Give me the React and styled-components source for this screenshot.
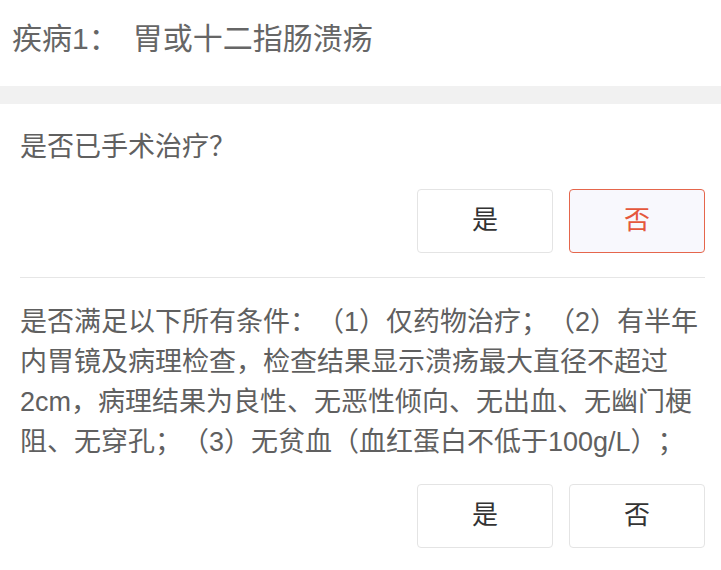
import React, { useState } from "react";
import styled, { createGlobalStyle } from "styled-components";

const Global = createGlobalStyle`
  html, body { margin: 0; padding: 0; background: #fff; }
  body {
    font-family: "Liberation Sans", "Noto Sans CJK SC", sans-serif;
    text-spacing-trim: space-all;
  }
  * { box-sizing: border-box; }
`;

const Page = styled.div`
  width: 721px;
  background: #fff;
`;

const Header = styled.div`
  height: 86px;
  display: flex;
  align-items: center;
  padding: 0 0 14px 12px;
  font-size: 30px;
  color: #666;
  text-spacing-trim: space-all;
`;

const DiseaseName = styled.span`
  margin-left: 14px;
`;

const Band = styled.div`
  height: 18px;
  background: #f1f1f1;
`;

const Body = styled.div`
  padding: 23px 16px 0 20px;
`;

const Question = styled.div`
  padding-bottom: 24px;
  border-bottom: ${(p) => (p.$last ? "none" : "1px solid #e6e6e6")};
  & + & { padding-top: 24px; }
`;

const Text = styled.div`
  font-size: 27px;
  line-height: 40px;
  color: #606060;
  text-spacing-trim: space-all;
`;

const Choices = styled.div`
  display: flex;
  justify-content: flex-end;
  gap: 16px;
  margin-top: 22px;
`;

const Choice = styled.button`
  width: 136px;
  height: 64px;
  border-radius: 4px;
  font-family: inherit;
  font-size: 26px;
  line-height: 1;
  padding: 0 0 3px;
  cursor: pointer;
  border: 1px solid ${(p) => (p.$active ? "#e5664c" : "#e4e4e4")};
  background: ${(p) => (p.$active ? "#f8f8fd" : "#fff")};
  color: ${(p) => (p.$active ? "#e5573c" : "#333")};
`;

const questions = [
  { text: "是否已手术治疗？", value: "否" },
  {
    text:
      "是否满足以下所有条件：（1）仅药物治疗；（2）有半年内胃镜及病理检查，检查结果显示溃疡最大直径不超过2cm，病理结果为良性、无恶性倾向、无出血、无幽门梗阻、无穿孔；（3）无贫血（血红蛋白不低于100g/L）；",
    value: null,
  },
];

export default function App() {
  const [answers, setAnswers] = useState(questions.map((q) => q.value));
  const pick = (i, v) =>
    setAnswers((a) => a.map((x, j) => (j === i ? v : x)));
  return (
    <Page>
      <Global />
      <Header>
        疾病1：<DiseaseName>胃或十二指肠溃疡</DiseaseName>
      </Header>
      <Band />
      <Body>
        {questions.map((q, i) => (
          <Question key={i} $last={i === questions.length - 1}>
            <Text>{q.text}</Text>
            <Choices>
              {["是", "否"].map((v) => (
                <Choice
                  key={v}
                  $active={answers[i] === v}
                  onClick={() => pick(i, v)}
                >
                  {v}
                </Choice>
              ))}
            </Choices>
          </Question>
        ))}
      </Body>
    </Page>
  );
}
